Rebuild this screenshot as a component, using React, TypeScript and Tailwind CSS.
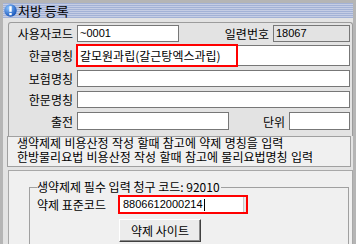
export default function App() {
  return (
    <div className="w-[356px] h-[244px] overflow-hidden bg-[#b5b5b5] pt-[3px] px-[3px] flex flex-col font-['Noto_Sans_CJK_KR',sans-serif] text-black">
      {/* Title bar */}
      <div className="h-[15px] flex items-center bg-[repeating-linear-gradient(to_bottom,#a3b2d6_0px,#a3b2d6_1px,#c5cde4_1px,#c5cde4_2px)]">
        <svg width="13" height="13" viewBox="0 0 13 13" className="ml-[1px]">
          <defs>
            <radialGradient id="ic" cx="35%" cy="30%" r="75%">
              <stop offset="0%" stopColor="#8cc4ff" />
              <stop offset="100%" stopColor="#1552b8" />
            </radialGradient>
          </defs>
          <circle cx="6.5" cy="6.5" r="6.2" fill="url(#ic)" />
          <rect x="5.3" y="2.2" width="2.4" height="5.6" fill="#fff" />
          <rect x="5.3" y="9" width="2.4" height="2.2" fill="#fff" />
        </svg>
        <span className="ml-[1px] text-[13px] leading-[15px]">처방 등록</span>
      </div>

      <div className="flex-1 bg-[#e3e3e3] flex flex-col">
        {/* Upper panel */}
        <div className="mt-[4px] ml-[5px] border-t border-l border-r border-[#9c9c9c] rounded-t-[3px] pt-[2px] pr-[2px] pb-[6px] flex flex-col text-[12px]">
          <div className="h-[17px] flex items-center">
            <span className="w-[64px] text-right leading-[17px]">사용자코드</span>
            <div className="ml-[4px] w-[102px] h-full border border-[#777] bg-white px-[2px] text-[11px] leading-[15px] font-['Liberation_Sans',sans-serif]">~0001</div>
            <span className="ml-auto leading-[17px]">일련번호</span>
            <div className="ml-[4px] w-[77px] h-full border border-[#777] bg-[#e3e3e3] px-[2px] text-[11px] leading-[15px] font-['Liberation_Sans',sans-serif]">18067</div>
          </div>

          <div className="mt-[2px] h-[23px] flex items-center">
            <span className="w-[64px] text-right leading-[17px]">한글명칭</span>
            <div className="relative ml-[4px] w-[273px] h-full py-[1px]">
              <div className="h-full border border-[#777] bg-white pl-[2px] leading-[19px]">갈모원과립(갈근탕엑스과립)</div>
              <div className="absolute left-[-1px] top-0 w-[162px] h-[23px] border-2 border-[#ff0000]" />
            </div>
          </div>

          <div className="mt-[3px] h-[17px] flex items-center">
            <span className="w-[64px] text-right leading-[17px]">보험명칭</span>
            <div className="ml-[4px] w-[273px] h-full border border-[#777] bg-white" />
          </div>

          <div className="mt-[4px] h-[17px] flex items-center">
            <span className="w-[64px] text-right leading-[17px]">한문명칭</span>
            <div className="ml-[4px] w-[273px] h-full border border-[#777] bg-white" />
          </div>

          <div className="mt-[4px] h-[18px] flex items-center">
            <span className="w-[64px] text-right leading-[17px]">출전</span>
            <div className="ml-[4px] w-[152px] h-full border border-[#777] bg-white" />
            <span className="ml-auto leading-[17px]">단위</span>
            <div className="ml-[4px] w-[61px] h-full border border-[#777] bg-white" />
          </div>
        </div>

        {/* Note box */}
        <div className="ml-[4px] w-[344px] h-[31px] border border-[#a0a0a0] bg-[#f0f0f0] pl-[9px] pt-[1px] text-[12px] leading-[13.5px] whitespace-nowrap font-['Liberation_Sans','Noto_Sans_CJK_KR',sans-serif]">
          <div>생약제제 비용산정 작성 할때 참고에 약제 명칭을 입력</div>
          <div>한방물리요법 비용산정 작성 할때 참고에 물리요법명칭 입력</div>
        </div>

        {/* Lower panel */}
        <div className="mt-[3px] ml-[5px] flex-1 bg-[#f0f0f0] border-t border-l border-r border-[#a8a8a8] flex flex-col">
          <div className="relative mt-[16px] ml-[20px] mr-[3px] flex-1 border-t border-l border-r border-[#a0a0a0] pt-[7px] pl-[7px] text-[12px]">
            <span className="absolute left-[7px] top-[-8px] bg-[#f0f0f0] leading-[14px] pr-[1px]">생약제제 필수 입력 청구 코드: 92010</span>
            <div className="h-[19px] flex items-center">
              <span className="w-[81px] leading-[17px]">약제 표준코드</span>
              <div className="w-[130px] h-full border-2 border-[#ff0000] bg-[#e8e8e8] pr-[2px]">
                <div className="h-full bg-white border-r border-[#c8c8c8] pl-[3px] flex items-center text-[11px] font-['Liberation_Sans',sans-serif]">
                  8806612000214<span className="ml-[1px] w-[1px] h-[12px] bg-black" />
                </div>
              </div>
            </div>
            <button className="mt-[5px] ml-[82px] w-[82px] h-[23px] bg-[#ececec] border-t border-l border-[#ffffff] border-r border-b border-r-[#404040] border-b-[#404040] shadow-[inset_-1px_-1px_#8a8a8a] text-[12px] leading-[20px]">약제 사이트</button>
          </div>
        </div>
      </div>
    </div>
  );
}
